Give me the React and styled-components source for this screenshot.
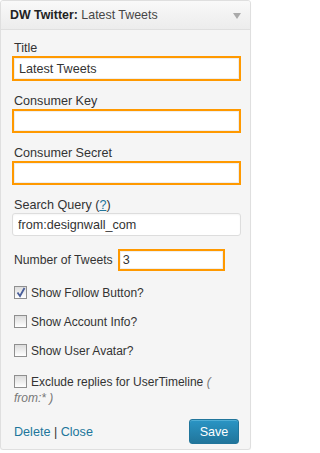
import React from "react";
import styled, { createGlobalStyle } from "styled-components";

const Global = createGlobalStyle`
  html, body { margin: 0; padding: 0; background: #ffffff; }
  body { font-family: "Liberation Sans", Arial, sans-serif; font-size: 13px; color: #333; }
`;

const Widget = styled.div`
  width: 249px;
  height: 448px;
  border: 1px solid #dfdfdf;
  border-radius: 3px;
  background: #f5f5f5;
  box-shadow: 0 1px 1px rgba(0,0,0,0.04);
  overflow: hidden;
  display: flex;
  flex-direction: column;
`;

const Header = styled.div`
  height: 28px;
  flex: none;
  display: flex;
  align-items: center;
  justify-content: space-between;
  padding: 0 9px 0 9px;
  background: linear-gradient(to bottom, #f9f9f9, #ececec);
  border-bottom: 1px solid #dfdfdf;
`;

const HeaderTitle = styled.div`
  font-size: 12.4px;
  color: #464646;
  white-space: nowrap;
  b { color: #222; font-weight: bold; }
`;

const Arrow = styled.span`
  width: 0;
  height: 0;
  border-left: 4px solid transparent;
  border-right: 4px solid transparent;
  border-top: 6px solid #aaa;
  margin-top: 2px;
`;

const Body = styled.div`
  padding: 11px 11px 0 11px;
  display: flex;
  flex-direction: column;
`;

const Field = styled.div`
  display: flex;
  flex-direction: column;
  margin-bottom: ${p => p.$mb ?? 13}px;
`;

const Label = styled.label`
  line-height: 15px;
  font-size: 12.6px;
  color: #333;
  padding-left: 2px;
  a { color: #21759b; }
`;

const Input = styled.input`
  box-sizing: border-box;
  width: 229px;
  height: ${p => p.$h ?? 25}px;
  margin: 0;
  font-family: "Liberation Sans", Arial, sans-serif;
  font-size: 12.6px;
  color: #333;
  padding: 0 5px;
  background: #fff;
  border: ${p => (p.$hl ? "2px solid #ff9900" : "1px solid #dddddd")};
  border-radius: ${p => (p.$hl ? "0" : "3px")};
  box-shadow: ${p => (p.$hl ? "inset 0 0 0 1px #eeeeee" : "inset 0 1px 2px rgba(0,0,0,0.04)")};
  outline: none;
`;

const InlineRow = styled.div`
  display: flex;
  align-items: center;
  padding-left: 2px;
  margin-bottom: 14px;
`;

const InlineLabel = styled.span`
  font-size: 12.2px;
  margin-right: 5px;
`;

const NumInput = styled(Input)`
  width: 107px;
  height: 22px;
  padding: 0 3px;
`;

const CheckRow = styled.div`
  padding-left: 2px;
  line-height: 16px;
  font-size: 12px;
  margin-bottom: ${p => p.$mb ?? 13}px;
`;

const Box = styled.span`
  display: inline-block;
  box-sizing: border-box;
  width: 13px;
  height: 13px;
  border: 1px solid #8f8f8f;
  background: linear-gradient(to bottom, #dcdcdc, #ffffff);
  vertical-align: -2px;
  margin-right: 4px;
  position: relative;
  svg { position: absolute; left: 1px; top: 0px; }
`;

const Note = styled.span`
  font-style: italic;
  color: #777;
`;

const Footer = styled.div`
  display: flex;
  align-items: center;
  justify-content: space-between;
  padding: 0 0 0 2px;
  margin-top: 13px;
`;

const Links = styled.div`
  color: #333;
  font-size: 12.6px;
  a { color: #21759b; text-decoration: none; }
`;

const SaveButton = styled.button`
  box-sizing: border-box;
  width: 50px;
  height: 25px;
  border: 1px solid #21759b;
  border-radius: 3px;
  background: linear-gradient(to bottom, #2a95c5, #21759b);
  color: #fff;
  font-family: "Liberation Sans", Arial, sans-serif;
  font-size: 12.6px;
  padding: 0;
  box-shadow: inset 0 1px 0 rgba(120,200,230,0.5);
`;

function Check({ checked }) {
  return (
    <Box>
      {checked && (
        <svg width="10" height="11" viewBox="0 0 10 11">
          <path d="M1.5 5.5 L4 9 L8.5 1" fill="none" stroke="#4a5f9a" strokeWidth="1.8" />
        </svg>
      )}
    </Box>
  );
}

export default function App() {
  return (
    <>
      <Global />
      <Widget>
        <Header>
          <HeaderTitle><b>DW Twitter:</b> Latest Tweets</HeaderTitle>
          <Arrow />
        </Header>
        <Body>
          <Field>
            <Label>Title</Label>
            <Input $hl defaultValue="Latest Tweets" />
          </Field>
          <Field>
            <Label>Consumer Key</Label>
            <Input $hl $h={24} defaultValue="" />
          </Field>
          <Field $mb={13}>
            <Label>Consumer Secret</Label>
            <Input $hl $h={24} defaultValue="" />
          </Field>
          <Field>
            <Label>Search Query (<a href="#">?</a>)</Label>
            <Input $h={23} defaultValue="from:designwall_com" />
          </Field>
          <InlineRow>
            <InlineLabel>Number of Tweets</InlineLabel>
            <NumInput $hl defaultValue="3" />
          </InlineRow>
          <CheckRow><Check checked />Show Follow Button?</CheckRow>
          <CheckRow><Check />Show Account Info?</CheckRow>
          <CheckRow $mb={15}><Check />Show User Avatar?</CheckRow>
          <CheckRow $mb={0}>
            <Check />Exclude replies for UserTimeline <Note>(</Note> <Note>from:*&nbsp;)</Note>
          </CheckRow>
          <Footer>
            <Links><a href="#">Delete</a> | <a href="#">Close</a></Links>
            <SaveButton>Save</SaveButton>
          </Footer>
        </Body>
      </Widget>
    </>
  );
}
